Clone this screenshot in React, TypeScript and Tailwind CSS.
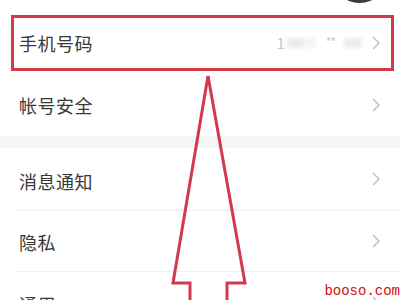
import React from "react";

const Chevron = () => (
  <svg width="9" height="14" viewBox="0 0 9 14" className="shrink-0">
    <path d="M1.5 1.5 L7 7 L1.5 12.5" fill="none" stroke="#c2c2c2" strokeWidth="1.6" strokeLinecap="round" strokeLinejoin="round" />
  </svg>
);

function Row({ label, right }: { label: string; right?: React.ReactNode }) {
  return (
    <div className="h-[62px] flex bg-white">
      <div className="flex-1 flex items-center pl-[19px] pr-[19px]">
        <span className="text-[18px] text-[#383838] tracking-[0.5px] leading-none">{label}</span>
        <div className="flex-1" />
        {right}
        <Chevron />
      </div>
    </div>
  );
}

export default function App() {
  return (
    <div
      className="relative w-[400px] h-[300px] overflow-hidden bg-white"
      style={{ fontFamily: '"Noto Sans CJK SC", "Noto Sans", sans-serif' }}
    >
      <div className="h-[12px] flex justify-end pr-[13px] overflow-hidden">
        <div className="w-[55px] h-[55px] rounded-full bg-[#3a3a3a] -mt-[52px]" />
      </div>
      <Row
        label="手机号码"
        right={
          <div className="flex items-center mr-[10px] text-[#c8c8c8] text-[15px]">
            <span>1</span>
            <span className="w-[18px] h-[10px] bg-[#ebebeb] ml-[2px] rounded-[2px] blur-[2px]" />
            <span className="w-[10px] h-[10px] bg-[#f2f2f2] rounded-[2px] blur-[2px]" />
            <span className="ml-[11px] text-[12px] -mt-[3px] tracking-[-1px]">**</span>
            <span className="ml-[9px] w-[18px] h-[10px] bg-[#ebebeb] rounded-[2px] blur-[2px]" />
          </div>
        }
      />
      <Row label="帐号安全" />
      <div className="h-[12px] bg-[#f5f5f5]" />
      <div className="h-[63px] bg-white flex flex-col">
        <div className="flex-1 flex items-center pl-[19px] pr-[19px]">
          <span className="text-[18px] text-[#383838] tracking-[0.5px] leading-none mt-[4px]">消息通知</span>
          <div className="flex-1" />
          <Chevron />
        </div>
        <div className="h-px bg-[#f0f0f0] ml-[17px]" />
      </div>
      <div className="h-[61px] bg-white flex flex-col">
        <div className="flex-1 flex items-center pl-[19px] pr-[19px]">
          <span className="text-[18px] text-[#383838] tracking-[0.5px] leading-none mt-[2px]">隐私</span>
          <div className="flex-1" />
          <Chevron />
        </div>
        <div className="h-px bg-[#f0f0f0] ml-[17px]" />
      </div>
      <div className="h-[62px] bg-white flex items-center pl-[19px] pr-[19px]">
        <span className="text-[18px] text-[#383838] tracking-[0.5px] leading-none mt-[2px]">通用</span>
        <div className="flex-1" />
        <Chevron />
      </div>

      {/* annotation rectangle */}
      <div className="absolute left-[11px] top-[15px] w-[383px] h-[56px] border-[3px] border-[#d23a4b] pointer-events-none" />

      {/* annotation arrow */}
      <svg className="absolute left-0 top-0 pointer-events-none" width="400" height="300" viewBox="0 0 400 300">
        <path
          d="M190 304 L190 283 L173 283 L208 76 L245 283 L227 283 L227 304"
          fill="none"
          stroke="#d23a4b"
          strokeWidth="3"
          strokeLinejoin="miter"
        />
      </svg>

      {/* watermark */}
      <div
        className="absolute right-0 bottom-[2px] text-[14px] leading-none text-[#cc1010]"
        style={{ fontFamily: '"Liberation Mono", monospace' }}
      >
        booso.com
      </div>
    </div>
  );
}
